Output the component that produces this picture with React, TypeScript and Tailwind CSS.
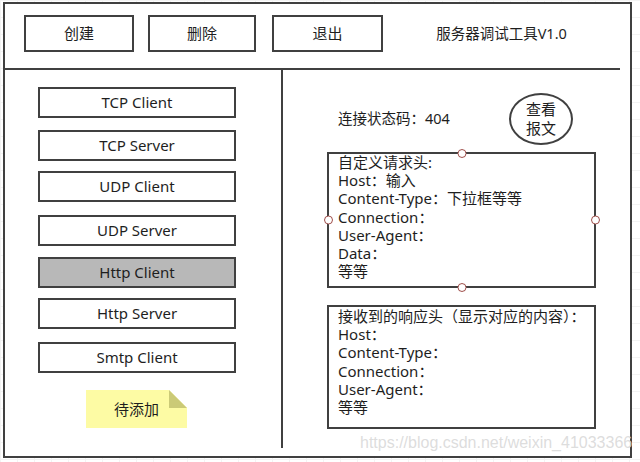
import React from "react";

const protocols = [
  { label: "TCP Client", mt: "mt-[17px]", active: false },
  { label: "TCP Server", mt: "mt-[12px]", active: false },
  { label: "UDP Client", mt: "mt-[10px]", active: false },
  { label: "UDP Server", mt: "mt-[13px]", active: false },
  { label: "Http Client", mt: "mt-[11px]", active: true },
  { label: "Http Server", mt: "mt-[10px]", active: false },
  { label: "Smtp Client", mt: "mt-[13px]", active: false },
];

const requestLines = [
  "自定义请求头:",
  "Host：输入",
  "Content-Type：下拉框等等",
  "Connection：",
  "User-Agent：",
  "Data：",
  "等等",
];

const responseLines = [
  "接收到的响应头（显示对应的内容）：",
  "Host：",
  "Content-Type：",
  "Connection：",
  "User-Agent：",
  "等等",
];

const Handle = ({ className }: { className: string }) => (
  <span
    className={`absolute w-[9px] h-[9px] rounded-full border border-[#a0504c] bg-white ${className}`}
  />
);

const App = (): JSX.Element => {
  return (
    <div className="relative w-[640px] h-[462px] overflow-hidden bg-white bg-[linear-gradient(#f3f3f3_1px,transparent_1px),linear-gradient(90deg,#f3f3f3_1px,transparent_1px)] bg-[size:17px_17px] text-[#1e1e1e] font-['Noto_Sans','Noto_Sans_CJK_SC',sans-serif]">
      {/* Main frame */}
      <div className="ml-[3px] mt-[2px] w-[629px] h-[456px] border-2 border-[#404040] bg-white flex flex-col">
        {/* Top toolbar */}
        <div className="h-[66px] mr-[10px] border-b-2 border-[#404040] flex items-start pt-[11px] pl-[19px] text-[15px]">
          <button className="w-[110px] h-[37px] border-2 border-[#404040] flex items-center justify-center">
            创建
          </button>
          <button className="ml-[14px] w-[108px] h-[37px] border-2 border-[#404040] flex items-center justify-center">
            删除
          </button>
          <button className="ml-[16px] w-[111px] h-[37px] border-2 border-[#404040] flex items-center justify-center">
            退出
          </button>
          <div className="flex-1 h-[37px] flex items-center justify-center text-[14.5px]">
            服务器调试工具V1.0
          </div>
        </div>

        <div className="flex flex-1">
          {/* Protocol list */}
          <div className="w-[278px] h-[378px] border-r-2 border-[#404040] pl-[33px] flex flex-col items-start">
            {protocols.map((p) => (
              <div
                key={p.label}
                className={`${p.mt} w-[198px] h-[31px] border-2 border-[#404040] flex items-center justify-center text-[15px] ${
                  p.active ? "bg-[#b8b8b8]" : "bg-white"
                }`}
              >
                {p.label}
              </div>
            ))}
            <div className="relative mt-[17px] ml-[48px] w-[101px] h-[38px] bg-[#fdfba4] flex items-center justify-center text-[15px]">
              待添加
              <svg className="absolute top-0 right-0" width="18" height="18" viewBox="0 0 18 18">
                <polygon points="0,0 18,0 18,18" fill="#ffffff" />
                <polygon points="0,0 0,18 18,18" fill="#cbca77" />
              </svg>
            </div>
          </div>

          {/* Detail panel */}
          <div className="flex-1 flex flex-col">
            <div className="flex items-center pt-[23px] pl-[55px]">
              <div className="w-[171px] text-[14.5px]">连接状态码：404</div>
              <div className="w-[64px] h-[52px] rounded-[50%] border-2 border-[#404040] flex flex-col items-center justify-center text-[15px] leading-[19px]">
                <span>查看</span>
                <span>报文</span>
              </div>
            </div>

            <div className="relative ml-[44px] mt-[7px] w-[269px] h-[136px] border-2 border-[#404040] pl-[9px] text-[15px] leading-[18.2px]">
              <div className="-mt-[1px]">
                {requestLines.map((l) => (
                  <div key={l}>{l}</div>
                ))}
              </div>
              <Handle className="-top-[5.5px] left-1/2 -translate-x-1/2" />
              <Handle className="-bottom-[5.5px] left-1/2 -translate-x-1/2" />
              <Handle className="top-1/2 -left-[5.5px] -translate-y-1/2" />
              <Handle className="top-1/2 -right-[5.5px] -translate-y-1/2" />
            </div>

            <div className="ml-[44px] mt-[17px] w-[269px] h-[124px] border-2 border-[#404040] pl-[9px] text-[15px] leading-[18.2px]">
              {responseLines.map((l) => (
                <div key={l}>{l}</div>
              ))}
            </div>
          </div>
        </div>
      </div>

      {/* Watermark */}
      <div className="absolute left-[360px] top-[433px] whitespace-nowrap text-[16px] leading-[20px] text-[#d9d9d9]/90 font-['Liberation_Sans',Arial,sans-serif]">
        https://blog.csdn.net/weixin_41033366
      </div>
    </div>
  );
};

export default App;
